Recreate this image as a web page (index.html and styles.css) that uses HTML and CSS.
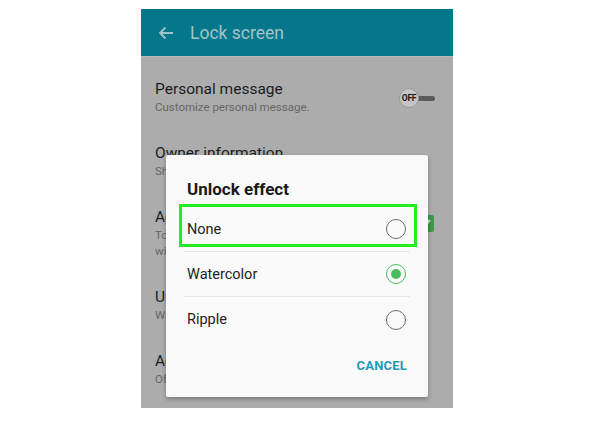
FILE: index.html
```html
<!DOCTYPE html>
<html>
<head>
<meta charset="utf-8">
<link rel="stylesheet" href="styles.css">
</head>
<body>
<div class="screen">
  <div class="appbar">
    <svg class="back" width="16" height="14" viewBox="0 0 16 14"><path d="M15 7H2M7.5 1.5L2 7l5.5 5.5" fill="none" stroke="#a3c2c7" stroke-width="1.8"/></svg>
    <span class="apptitle">Lock screen</span>
  </div>
  <div class="list">
    <div class="item">
      <div class="texts">
        <div class="title">Personal message</div>
        <div class="sub">Customize personal message.</div>
      </div>
      <div class="toggle"><span class="track"></span><span class="knob">OFF</span></div>
    </div>
    <div class="item">
      <div class="texts">
        <div class="title">Owner information</div>
        <div class="sub">Show owner information</div>
      </div>
    </div>
    <div class="item">
      <div class="texts">
        <div class="title">Additional information</div>
        <div class="sub">Tomorrow's weather forecast</div>
        <div class="sub">with the clock.</div>
      </div>
      <div class="check">
        <svg width="18" height="17" viewBox="0 0 18 17"><path d="M4 9l3.5 3.5L14 5" fill="none" stroke="#d9d9d9" stroke-width="2"/></svg>
      </div>
    </div>
    <div class="item">
      <div class="texts">
        <div class="title">Unlock effect</div>
        <div class="sub">Watercolor</div>
      </div>
    </div>
    <div class="item">
      <div class="texts">
        <div class="title">Additional information</div>
        <div class="sub">Off</div>
      </div>
    </div>
  </div>

  <div class="dialog">
    <div class="dtitle">Unlock effect</div>
    <div class="options">
      <div class="option">
        <span>None</span>
        <span class="radio"></span>
      </div>
      <div class="option">
        <span>Watercolor</span>
        <span class="radio on"></span>
      </div>
      <div class="option">
        <span>Ripple</span>
        <span class="radio"></span>
      </div>
    </div>
    <div class="actions"><span class="cancel">CANCEL</span></div>
    <div class="highlight"></div>
  </div>
</div>
</body>
</html>
```

FILE: styles.css
```css
html, body {
  margin: 0;
  padding: 0;
  background: #ffffff;
}
body {
  font-family: Roboto, "Noto Sans", sans-serif;
}
.screen {
  position: relative;
  margin: 9px 0 0 141px;
  width: 312px;
  height: 399px;
  background: #acacac;
  overflow: hidden;
}
.appbar {
  height: 48px;
  background: #05778a;
  border-bottom: 1px solid #b8b8b8;
  box-sizing: border-box;
  display: flex;
  align-items: center;
  padding-left: 17px;
}
.back {
  display: block;
}
.apptitle {
  margin-left: 16px;
  font-size: 17.5px;
  color: #a3c2c7;
  margin-top: 1px;
}
.list {
  display: flex;
  flex-direction: column;
}
.item {
  display: flex;
  align-items: center;
  padding: 22px 15px 6px 14px;
}
.texts {
  flex: 1;
}
.title {
  font-size: 15.5px;
  line-height: 20px;
  color: #1c1c1c;
  white-space: nowrap;
}
.sub {
  font-size: 11.5px;
  line-height: 16px;
  color: #676767;
  white-space: nowrap;
}
.toggle {
  position: relative;
  width: 38px;
  height: 20px;
  margin-top: 2px;
  margin-right: 1px;
}
.track {
  position: absolute;
  left: 16px;
  top: 8px;
  width: 20px;
  height: 5px;
  border-radius: 3px;
  background: #5a5a5a;
}
.knob {
  position: absolute;
  left: 0;
  top: 0;
  width: 20px;
  height: 20px;
  border-radius: 50%;
  background: #c4c4c4;
  border: 1px solid #9a9a9a;
  box-sizing: border-box;
  font-size: 8.5px;
  font-weight: 700;
  color: #151515;
  display: flex;
  align-items: center;
  justify-content: center;
  letter-spacing: -0.3px;
}
.check {
  width: 18px;
  height: 17px;
  background: #3c9a48;
  border-radius: 2px;
  margin-top: -20px;
  margin-right: 4px;
}
.check svg {
  display: block;
}

.dialog {
  position: absolute;
  left: 25px;
  top: 146px;
  width: 262px;
  height: 242px;
  background: #fafafa;
  border-radius: 2px;
  box-shadow: 0 2px 4px rgba(0,0,0,0.3);
  box-sizing: border-box;
  display: flex;
  flex-direction: column;
}
.dtitle {
  font-size: 17px;
  font-weight: 700;
  color: #1a1a1a;
  padding: 24px 0 0 21px;
  line-height: 20px;
}
.options {
  margin: 8px 18px 0 18px;
  display: flex;
  flex-direction: column;
}
.option {
  height: 44px;
  display: flex;
  align-items: center;
  justify-content: space-between;
  padding: 0 4px 0 3px;
  font-size: 14.5px;
  color: #222;
  border-bottom: 1.5px solid #e6e6e6;
}
.option:last-child {
  border-bottom: none;
  height: 45px;
}
.radio {
  width: 20px;
  height: 20px;
  border-radius: 50%;
  border: 1.6px solid #6e6e6e;
  box-sizing: border-box;
  display: flex;
  align-items: center;
  justify-content: center;
}
.radio.on {
  border-color: #4cbd5c;
}
.radio.on::after {
  content: "";
  width: 10px;
  height: 10px;
  border-radius: 50%;
  background: #4cbd5c;
}
.actions {
  display: flex;
  justify-content: flex-end;
  padding: 16px 21px 0 0;
}
.cancel {
  font-size: 13px;
  font-weight: 700;
  color: #1d9bb9;
  letter-spacing: 0.2px;
}
.highlight {
  position: absolute;
  left: 13px;
  top: 49px;
  width: 238px;
  height: 43px;
  border: 3px solid #22ee22;
  box-sizing: border-box;
}
```
